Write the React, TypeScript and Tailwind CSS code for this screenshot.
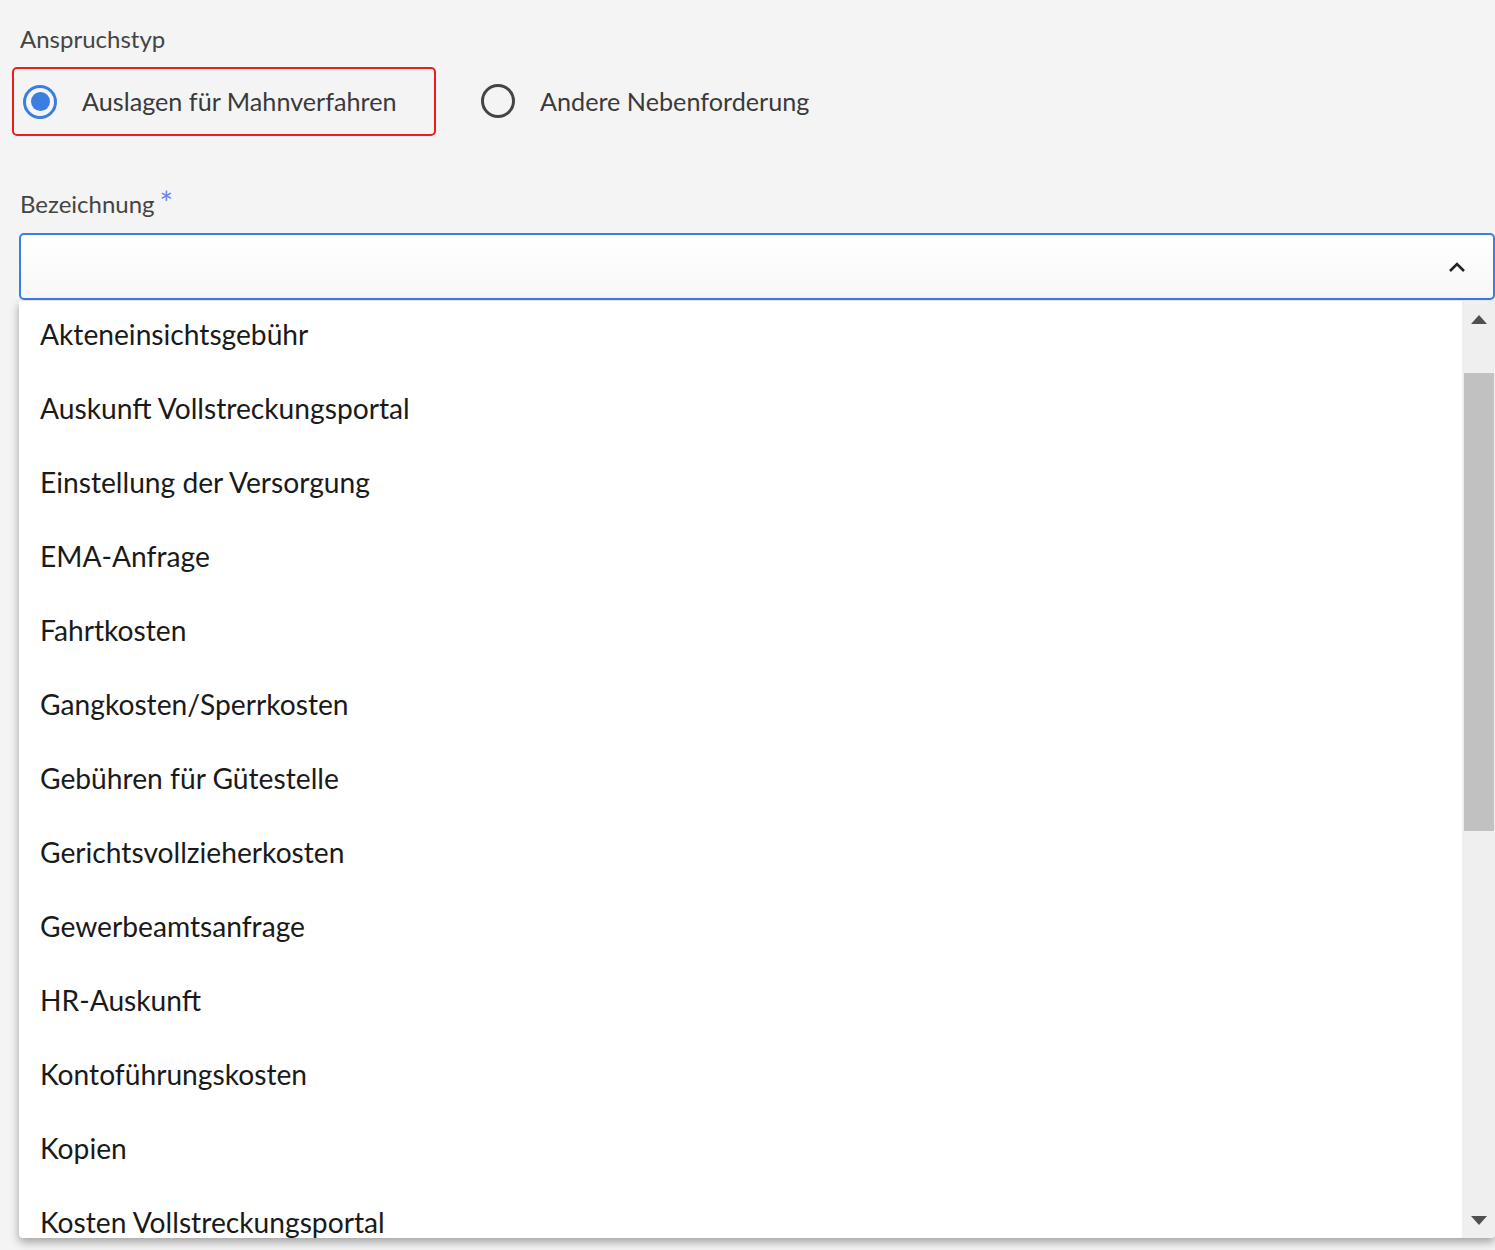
import { useState } from "react";

const OPTIONS = [
  "Akteneinsichtsgebühr",
  "Auskunft Vollstreckungsportal",
  "Einstellung der Versorgung",
  "EMA-Anfrage",
  "Fahrtkosten",
  "Gangkosten/Sperrkosten",
  "Gebühren für Gütestelle",
  "Gerichtsvollzieherkosten",
  "Gewerbeamtsanfrage",
  "HR-Auskunft",
  "Kontoführungskosten",
  "Kopien",
  "Kosten Vollstreckungsportal",
  "Portokosten",
  "Sonstige Auslagen",
];

const Radio = ({ checked }: { checked: boolean }) =>
  checked ? (
    <span className="flex h-[34px] w-[34px] shrink-0 items-center justify-center rounded-full border-[3px] border-[#3b7de0]">
      <span className="h-[19px] w-[19px] rounded-full bg-[#3b7de0]" />
    </span>
  ) : (
    <span className="h-[34px] w-[34px] shrink-0 rounded-full border-[3px] border-[#444]" />
  );

export default function App() {
  const [type, setType] = useState("auslagen");

  return (
    <div
      className="min-h-screen bg-[#f4f4f4] pl-[19px] pt-[24px] text-[#3a3a3a]"
      style={{ fontFamily: "Lato, 'Open Sans', sans-serif" }}
    >
      {/* Anspruchstyp */}
      <div className="pl-px text-[24px] leading-[30px] text-[#444]">Anspruchstyp</div>
      <div className="mt-[13px] flex items-center">
        <button
          onClick={() => setType("auslagen")}
          className="-ml-[7px] flex h-[69px] w-[424px] items-center gap-[25px] rounded-[5px] border-2 border-[#f01c1c] pl-[9px] text-[25.2px]"
        >
          <Radio checked={type === "auslagen"} />
          <span>Auslagen für Mahnverfahren</span>
        </button>
        <button
          onClick={() => setType("andere")}
          className="ml-[45px] flex items-center gap-[25px] text-[25.2px]"
        >
          <Radio checked={type === "andere"} />
          <span>Andere Nebenforderung</span>
        </button>
      </div>

      {/* Bezeichnung */}
      <div className="mt-[53px] flex items-start pl-px text-[24px] leading-[30px] text-[#444]">
        Bezeichnung
        <span className="-mt-[1px] ml-[5px] text-[32px] leading-[30px] text-[#6b84ec]">*</span>
      </div>
      <div className="mt-[14px] flex h-[67px] items-center justify-end rounded-[5px] border-2 border-[#3b7de0] bg-gradient-to-b from-white to-[#f7f7f7] pr-[26px]">
        <svg width="20" height="14" viewBox="0 0 20 14" fill="none" className="text-[#222]">
          <path d="M3 11 L10 4 L17 11" stroke="currentColor" strokeWidth="2.6" />
        </svg>
      </div>

      {/* Dropdown list */}
      <div className="mt-px flex h-[937px] overflow-hidden rounded-b-[4px] bg-white shadow-[0_4px_10px_rgba(0,0,0,0.35)]">
        <ul className="flex-1 overflow-hidden">
          {OPTIONS.map((o) => (
            <li
              key={o}
              className="flex h-[74px] items-center pb-[8px] pl-[21px] text-[28.2px] text-[#1a1a1a]"
            >
              {o}
            </li>
          ))}
        </ul>
        <div className="flex w-[33px] flex-col bg-[#efefef]">
          <div className="flex h-[36px] items-center justify-center">
            <svg width="16" height="9" viewBox="0 0 16 9">
              <path d="M0 9 L8 0 L16 9 Z" fill="#505050" />
            </svg>
          </div>
          <div className="ml-[2px] mr-px mt-[36px] h-[458px] bg-[#c1c1c1]" />
          <div className="flex-1" />
          <div className="flex h-[36px] items-center justify-center">
            <svg width="16" height="9" viewBox="0 0 16 9">
              <path d="M0 0 L16 0 L8 9 Z" fill="#505050" />
            </svg>
          </div>
        </div>
      </div>
    </div>
  );
}
